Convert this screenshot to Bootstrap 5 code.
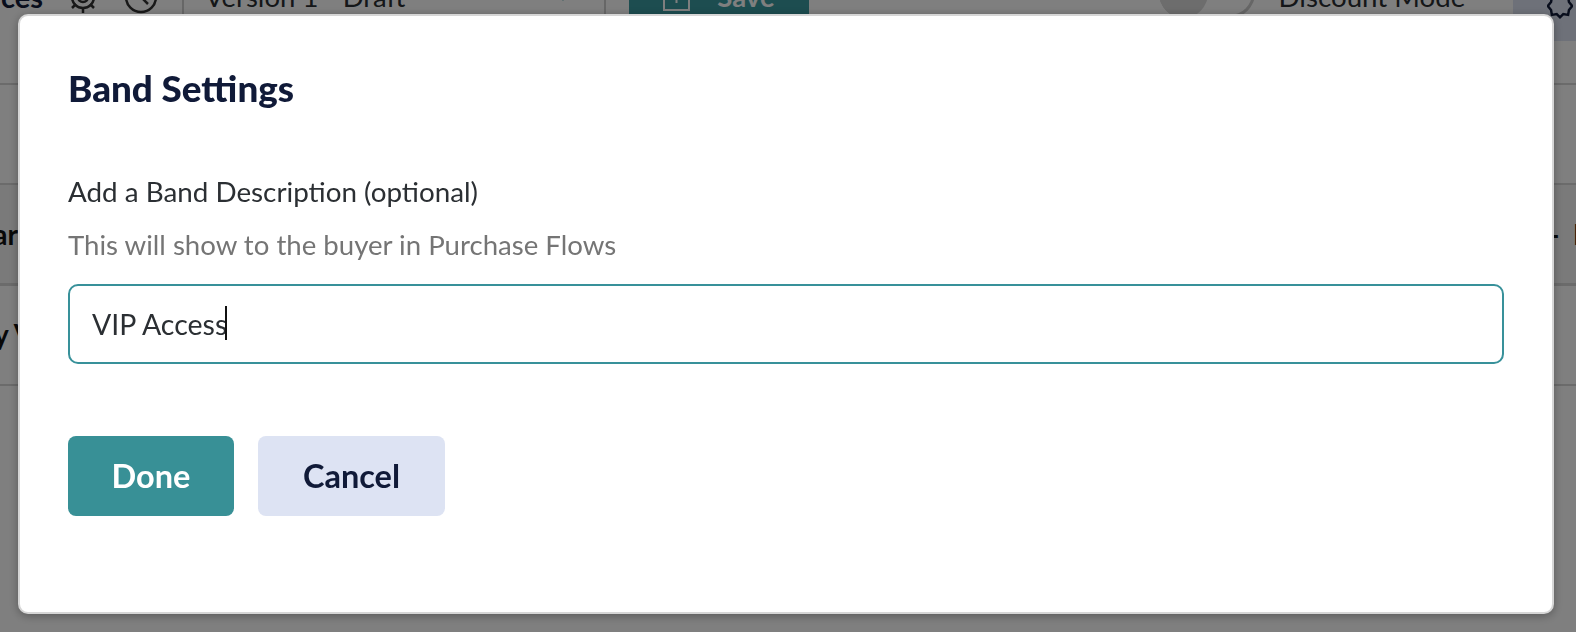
<!doctype html>
<html lang="en">
<head>
<meta charset="utf-8">
<title>Band Settings</title>
<link rel="stylesheet" href="https://cdn.jsdelivr.net/npm/bootstrap@5.3.0/dist/css/bootstrap.min.css">
<style>
html, body { height: 100%; overflow: hidden; }
body { background: #fff; font-family: Lato, "Liberation Sans", sans-serif; color: #2b2f33; }
.page-bg { height: 632px; overflow: hidden; }
.top-bar { height: 114px; margin-top: -29px; border-bottom: 2px solid #d6d6d6; }
.top-strip { height: 52px; }
.top-title { width: 43px; font-size: 29px; font-weight: 700; color: #101a38; line-height: 52px; overflow: hidden; direction: rtl; white-space: nowrap; }
.ic { flex: none; }
.gear-ic { margin-left: 22px; }
.clock-ic { margin-left: 22px; }
.version-box { width: 425px; margin-left: 23px; height: 52px; padding: 0 34px 0 21px; border-left: 2px solid #cfcfcf; border-right: 2px solid #cfcfcf; font-size: 27.5px; line-height: 52px; }
.save-btn { width: 180px; height: 52px; margin-left: 23px; background: #3a9aa0; color: #fff; font-size: 27.5px; font-weight: 700; gap: 27px; }
.toggle-track { width: 96px; height: 50px; margin-left: 350px; margin-bottom: 8px; border: 3px solid #cccccc; border-left: 0; border-radius: 25px; background: #fff; position: relative; }
.toggle-knob { width: 49px; height: 50px; border-radius: 50%; background: #dadada; position: absolute; left: 0; top: -3px; }
.discount { margin-left: 24px; width: 235px; font-size: 27.7px; line-height: 52px; white-space: nowrap; }
.corner-cell { width: 63px; height: 70px; margin-top: 18px; padding-left: 34px; background: #dce3f2; }
.bg-row { height: 100px; border-bottom: 2px solid #d6d6d6; font-size: 28px; font-weight: 700; color: #111; white-space: nowrap; overflow: hidden; }
.bg-row-dim { height: 101px; background: #f4f4f4; border-bottom-width: 3px; }
.bg-row-short { height: 100px; padding-bottom: 3px; }
.row-left { width: 18px; direction: rtl; overflow: hidden; }
.row-left-open { width: 60px; margin-left: -6px; }
.row-dash { width: 24px; }
.row-cap { width: 3px; }
.veil { position: fixed; inset: 0; background: rgba(0, 0, 0, .5); padding: 14px 22px 18px 18px; }
.dialog-card { height: 600px; background: #fff; border: 2px solid #d6d6d6; border-radius: 10px; padding: 46px 48px 0; box-shadow: 0 2px 10px rgba(0, 0, 0, .3); }
.dialog-title { font-size: 36.8px; font-weight: 900; line-height: 52px; color: #101a38; margin: 0 0 60px; }
.field-label { font-size: 27.8px; line-height: 36px; margin: 0 0 17px; display: block; color: #2b2f33; }
.field-help { font-size: 27.6px; line-height: 36px; color: #757575; margin: 0 0 21px; }
.field-input.form-control { height: 80px; padding: 0 22px; border: 2px solid #38919a; border-radius: 10px; font-size: 28.5px; color: #2b2f33; box-shadow: none; }
.input-wrap { position: relative; }
.caret-line { position: absolute; left: 157px; top: 22px; width: 2px; height: 34px; background: #111; }
.btn-done.btn, .btn-cancel.btn { height: 80px; border: 0; border-radius: 8px; font-size: 32.5px; font-weight: 700; padding: 0; }
.btn-done.btn { width: 166px; background: #389096; color: #fff; }
.btn-cancel.btn { width: 187px; background: #dde3f3; color: #101a38; }
.btn-row { margin-top: 72px; gap: 24px; }
</style>
</head>
<body>
<div class="page-bg">
  <div class="top-bar">
    <div class="top-strip d-flex align-items-center">
      <div class="top-title">ces</div>
      <svg class="ic gear-ic" width="36" height="36" viewBox="0 0 36 36" fill="none" stroke="#333" stroke-width="2.5"><circle cx="18" cy="18" r="11"/><circle cx="18" cy="18" r="5"/><path d="M18 2v6M18 28v6M2 18h6M28 18h6M7 7l4 4M25 25l4 4M29 7l-4 4M11 25l-4 4"/></svg>
      <svg class="ic clock-ic" width="36" height="36" viewBox="0 0 36 36" fill="none" stroke="#333" stroke-width="2.5"><circle cx="18" cy="18" r="15"/><path d="M18 8v10l7 7"/></svg>
      <div class="version-box d-flex align-items-center justify-content-between"><span>Version 1 - Draft</span><svg width="14" height="10" viewBox="0 0 14 10" fill="none" stroke="#3a9aa0" stroke-width="2.5"><path d="M1 1l6 6 6-6"/></svg></div>
      <div class="save-btn d-flex align-items-center justify-content-center">
        <svg width="27" height="27" viewBox="0 0 27 27" fill="none" stroke="#fff" stroke-width="2"><path d="M1 1h25v25H1z"/><path d="M13.500 8v11"/></svg><span>Save</span>
      </div>
      <div class="toggle-track"><div class="toggle-knob"></div></div>
      <div class="discount">Discount Mode</div>
      <div class="corner-cell d-flex align-items-center"><svg width="26" height="28" viewBox="0 0 32 32" fill="none" stroke="#101a38" stroke-width="3"><path d="M16 2l4 4 6-1 1 6 4 5-4 5-1 6-6-1-4 4-4-4-6 1-1-6-4-5 4-5 1-6 6 1z"/></svg></div>
    </div>
  </div>
  <div class="bg-row"></div>
  <div class="bg-row bg-row-dim d-flex align-items-center justify-content-between">
    <div class="row-left">ar</div>
    <div class="d-flex align-items-center"><span class="row-dash">-</span><span class="row-cap overflow-hidden">E</span></div>
  </div>
  <div class="bg-row bg-row-short d-flex align-items-center"><div class="row-left-open">y V</div></div>
</div>
<div class="veil">
  <div class="dialog-card modal-content">
    <h2 class="dialog-title">Band Settings</h2>
    <label class="field-label" for="band-desc">Add a Band Description (optional)</label>
    <p class="field-help">This will show to the buyer in Purchase Flows</p>
    <div class="input-wrap">
      <input id="band-desc" class="form-control field-input" type="text" value="VIP Access">
      <span class="caret-line"></span>
    </div>
    <div class="btn-row d-flex">
      <button type="button" class="btn btn-done">Done</button>
      <button type="button" class="btn btn-cancel">Cancel</button>
    </div>
  </div>
</div>
<script src="https://cdn.jsdelivr.net/npm/bootstrap@5.3.0/dist/js/bootstrap.bundle.min.js"></script>
</body>
</html>
